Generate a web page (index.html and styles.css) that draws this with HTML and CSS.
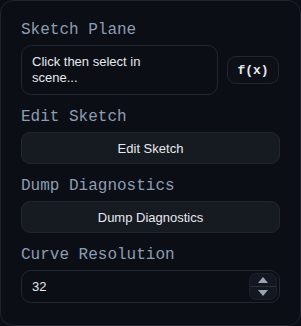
FILE: index.html
```html
<!DOCTYPE html>
<html>
<head>
<meta charset="utf-8">
<link rel="stylesheet" href="styles.css">
</head>
<body>
<div class="panel">
  <div class="field">
    <div class="label">Sketch Plane</div>
    <div class="row">
      <div class="picker">Click then select in scene...</div>
      <button class="fx">f(x)</button>
    </div>
  </div>
  <div class="field">
    <div class="label">Edit Sketch</div>
    <button class="btn">Edit Sketch</button>
  </div>
  <div class="field">
    <div class="label">Dump Diagnostics</div>
    <button class="btn">Dump Diagnostics</button>
  </div>
  <div class="field">
    <div class="label">Curve Resolution</div>
    <div class="number">
      <span class="value">32</span>
      <div class="spin">
        <span class="arrow up"></span>
        <span class="sep"></span>
        <span class="arrow down"></span>
      </div>
    </div>
  </div>
</div>
</body>
</html>
```
FILE: styles.css
```css
html, body {
  margin: 0;
  padding: 0;
  background: #0b0e14;
}
.panel {
  box-sizing: border-box;
  width: 301px;
  height: 326px;
  border: 1px solid #1f242d;
  border-radius: 13px;
  background: #0b0e15;
  padding: 20px 20px 20px 20px;
  display: flex;
  flex-direction: column;
  gap: 13px;
}
.field {
  display: flex;
  flex-direction: column;
  gap: 5px;
}
.label {
  font-family: "Liberation Mono", monospace;
  font-size: 16px;
  line-height: 19px;
  color: #8c9db3;
}
.row {
  display: flex;
  align-items: center;
  gap: 9px;
}
.picker {
  box-sizing: border-box;
  width: 197px;
  height: 50px;
  border: 1px solid #22272f;
  border-radius: 10px;
  padding: 8px 40px 8px 10px;
  font-family: "Liberation Sans", Arial, sans-serif;
  font-size: 13px;
  line-height: 16px;
  color: #e6e9ef;
}
.fx {
  box-sizing: border-box;
  width: 52px;
  height: 28px;
  border: 1px solid #22272f;
  border-radius: 9px;
  background: #0d1017;
  font-family: "Liberation Mono", monospace;
  font-weight: bold;
  font-size: 13px;
  color: #e6e9ef;
  padding: 0;
}
.btn {
  box-sizing: border-box;
  width: 100%;
  height: 32px;
  border: 1px solid #22272f;
  border-radius: 9px;
  background: #161a21;
  font-family: "Liberation Sans", Arial, sans-serif;
  font-size: 13px;
  color: #e6e9ef;
  padding: 0;
}
.number {
  box-sizing: border-box;
  height: 33px;
  border: 1px solid #22272f;
  border-radius: 10px;
  padding: 0 2px 0 10px;
  display: flex;
  align-items: center;
  justify-content: space-between;
  font-family: "Liberation Sans", Arial, sans-serif;
  font-size: 13px;
  color: #e6e9ef;
}
.spin {
  box-sizing: border-box;
  width: 28px;
  height: 27px;
  border: 1px solid #1c2029;
  border-radius: 7px;
  background: #131720;
  display: flex;
  flex-direction: column;
  align-items: center;
  justify-content: center;
  gap: 3px;
}
.arrow {
  width: 0;
  height: 0;
  border-left: 5px solid transparent;
  border-right: 5px solid transparent;
}
.arrow.up {
  border-bottom: 6px solid #9aa3b2;
}
.arrow.down {
  border-top: 6px solid #9aa3b2;
}
.sep {
  width: 100%;
  height: 1px;
  background: #2a2f38;
}
```
